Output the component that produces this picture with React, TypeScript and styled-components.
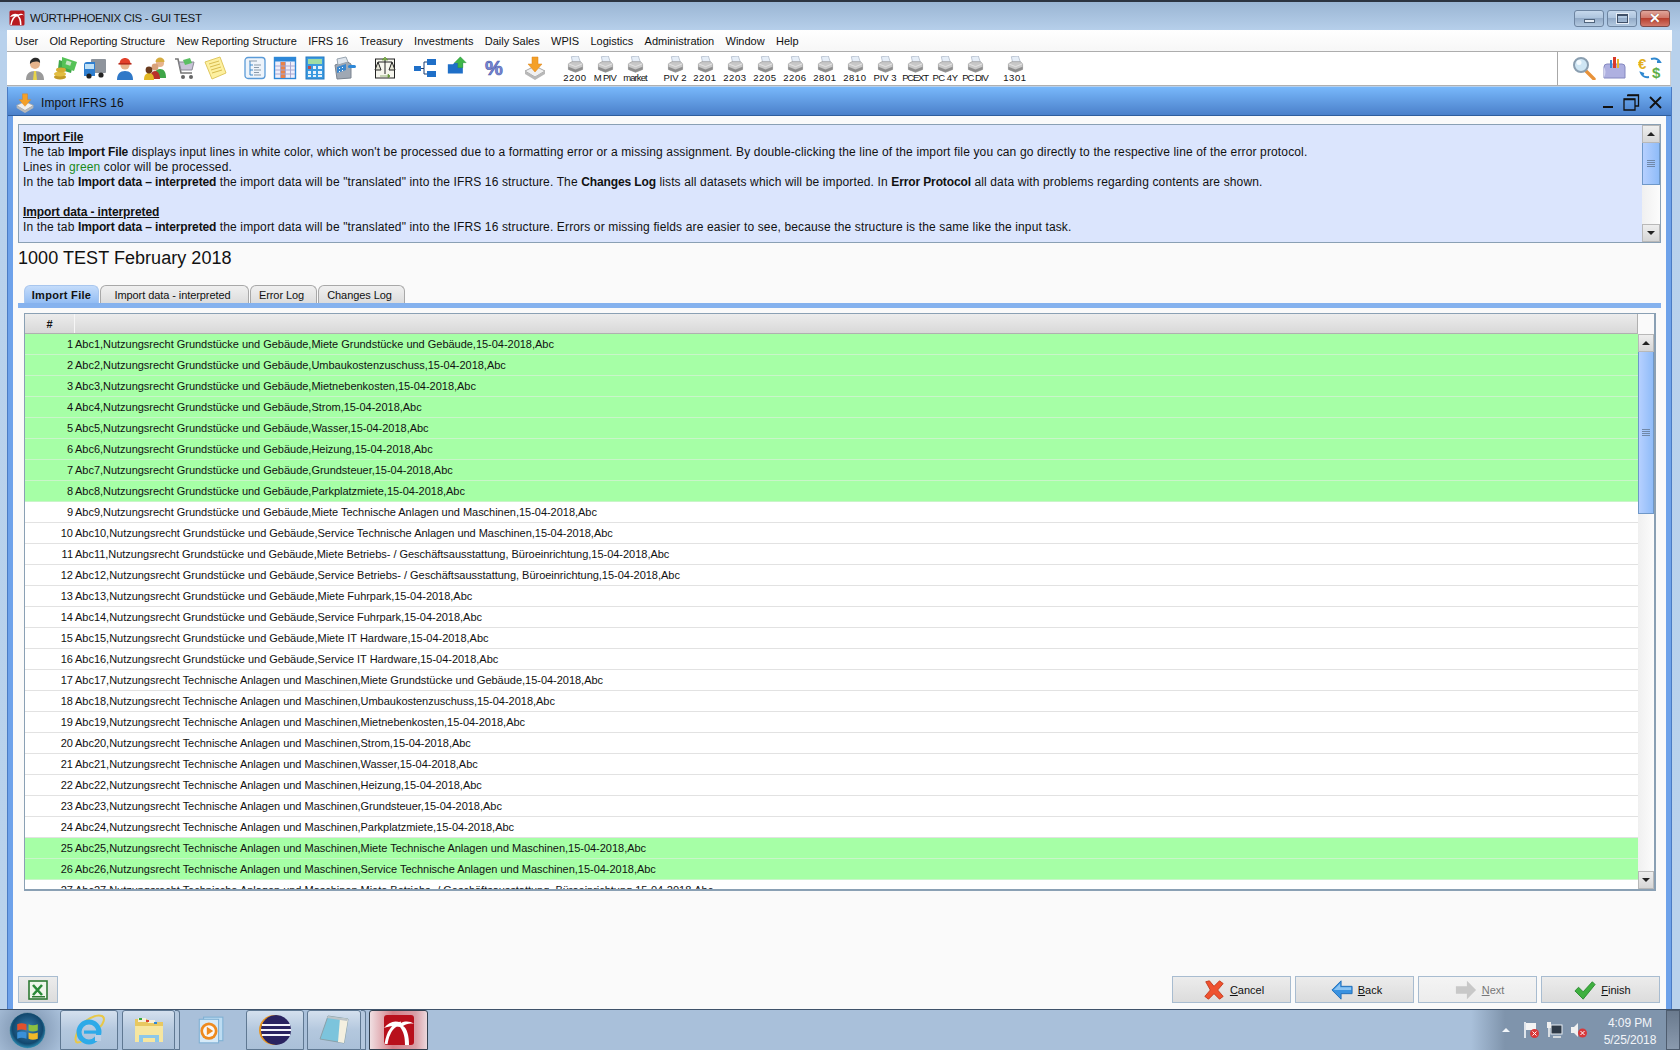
import React from "react";
import styled, { createGlobalStyle } from "styled-components";

const Global = createGlobalStyle`
  html, body { margin: 0; padding: 0; background: #a9c0da; overflow: hidden; }
  * { box-sizing: border-box; }
  svg { display: block; }
  #root { width: 1680px; height: 1050px; font-family: "Liberation Sans", Arial, sans-serif; color: #111; }
`;

const Page = styled.div`
  width: 1680px; height: 1050px; display: flex; flex-direction: column; overflow: hidden;
`;
const AppWindow = styled.div`
  height: 1009px; display: flex; flex-direction: column;
  padding: 0 8px 0 7px;
  border-top: 2px solid #2c3440;
  background: linear-gradient(#9ab5d3 0, #b8d1ec 30px, #b9d2ec 100%);
`;
const TitleBar = styled.div`
  height: 28px; flex: none; display: flex; align-items: center; padding: 4px 0 0 2px; position: relative;
`;
const TitleText = styled.span`
  margin-left: 5px; font-size: 11.5px; letter-spacing: -0.3px; color: #161616; white-space: nowrap;
`;
const WinControls = styled.div`
  margin-left: auto; display: flex; gap: 3px; margin-right: 2px;
`;
const WinButton = styled.div<{ $close?: boolean }>`
  width: 30px; height: 17px; border-radius: 3px; display: flex; align-items: center; justify-content: center;
  border: 1px solid ${(p) => (p.$close ? "#7d4a48" : "#6d84a0")};
  background: ${(p) =>
    p.$close
      ? "linear-gradient(#e0a59a 0, #d0786a 45%, #b8402f 50%, #d2786a 100%)"
      : "linear-gradient(#c6d8ec 0, #aec5de 45%, #93abc8 50%, #b3c9e0 100%)"};
`;
const MinGlyph = styled.i`
  width: 11px; height: 4px; margin-top: 5px; background: #e7eef6; border: 1px solid #50647c; display: block;
`;
const MaxGlyph = styled.i`
  width: 11px; height: 9px; background: transparent; border: 1px solid #3f5068; border-top-width: 2px; display: block; box-shadow: 0 0 0 1px #e8eef6;
`;
const CloseGlyph = styled.span`
  color: #fff; font-weight: 700; font-size: 14px; line-height: 14px; text-shadow: 0 0 1px #5a1a10;
`;
const MenuBar = styled.div`
  height: 21px; flex: none; display: flex; align-items: center; padding-left: 8px; background: linear-gradient(#ffffff, #f7f7f7);
`;
const MenuItem = styled.span`
  font-size: 11px; color: #111; white-space: nowrap; margin-right: 11.3px;
`;
const ToolBar = styled.div`
  height: 35px; flex: none; display: flex; align-items: flex-start; padding-left: 13px; background: #fff;
  border-top: 1px solid #adadad; border-bottom: 1px solid #b0b0b0; border-right: 1px solid #d0d0d0; margin-right: 1px;
`;
const Tool = styled.div<{ $gap?: number }>`
  width: 30px; height: 33px; flex: none; display: flex; flex-direction: column; align-items: center; padding-top: 4px;
  margin-left: ${(p) => p.$gap ?? 0}px;
`;
const PrinterLabel = styled.span<{ $track: number }>`
  font-size: 9.5px; line-height: 9px; white-space: nowrap; color: #111; letter-spacing: ${(p) => p.$track}px;
`;
const ToolRight = styled.div`
  margin-left: auto; width: 113px; height: 100%; border-left: 1px solid #a8a8a8; display: flex; align-items: flex-start; padding: 4px 0 0 14px; gap: 6px;
  & > :last-child { margin-left: 6px; }
`;
const InnerFrame = styled.div`
  flex: 1; margin-top: 1px; display: flex; flex-direction: column; min-height: 0;
  background: #6ea2ea; padding: 0 5px 0 5px; border-left: 1px solid #4b7cc4; border-right: 1px solid #4b7cc4;
`;
const FrameTitle = styled.div`
  height: 29px; flex: none; margin: 0 -5px; display: flex; align-items: center; padding: 3px 0 0 7px; position: relative;
  background: linear-gradient(#78b8fb, #4b80ca); border-bottom: 1px solid #2f5d9c;
`;
const FrameTitleText = styled.span`
  margin-left: 6px; font-size: 12px; letter-spacing: 0.1px; color: #111;
`;
const FrameControls = styled.div`
  margin-left: auto; display: flex; align-items: center; gap: 9px; padding-right: 9px;
`;
const FrameMin = styled.i`
  display: block; width: 10px; height: 2px; background: #111; margin-top: 9px; margin-right: 1px;
`;
const Content = styled.div`
  flex: 1; min-height: 0; display: flex; flex-direction: column; background: #fafafa; padding: 8px 5px 6px 5px;
`;
const InfoBox = styled.div`
  height: 119px; flex: none; display: flex; background: #dbe5fd; border: 1px solid #8aa0b4;
`;
const InfoText = styled.div`
  flex: 1; padding: 5px 0 0 4px; font-size: 12px; line-height: 15px; color: #111; overflow: hidden; white-space: nowrap; letter-spacing: 0.14px;
`;
const InfoTitle = styled.div`
  font-weight: 700; text-decoration: underline; letter-spacing: -0.1px;
`;
const Strong = styled.b`
  font-weight: 700; letter-spacing: -0.12px;
`;
const Gap = styled.div`
  height: 15px;
`;
const GreenWord = styled.span`
  color: #1a8a1a;
`;
const ScrollV = styled.div<{ $w: number }>`
  width: ${(p) => p.$w}px; flex: none; display: flex; flex-direction: column; background: linear-gradient(90deg, #f0f0f0, #fcfcfc);
`;
const ScrollBtn = styled.div<{ $h: number }>`
  height: ${(p) => p.$h}px; flex: none; display: flex; align-items: center; justify-content: center;
  background: linear-gradient(#eeeeee, #d6d6d6); border: 1px solid #b8b8b8;
`;
const TriUp = styled.i`
  display: block; width: 0; height: 0; border-left: 4px solid transparent; border-right: 4px solid transparent; border-bottom: 4px solid #222;
`;
const TriDown = styled.i`
  display: block; width: 0; height: 0; border-left: 4px solid transparent; border-right: 4px solid transparent; border-top: 4px solid #222;
`;
const Thumb = styled.div<{ $h: number }>`
  height: ${(p) => p.$h}px; flex: none; display: flex; align-items: center; justify-content: center;
  background: linear-gradient(90deg, #b6d0ff, #8fbcf8); border: 1px solid #6f98c8; border-top: 0;
`;
const Grip = styled.i`
  display: block; width: 8px; height: 8px;
  background: repeating-linear-gradient(#7088a8 0, #7088a8 1px, transparent 1px, transparent 2px);
`;
const ScrollFill = styled.div`
  flex: 1;
`;
const Heading = styled.div`
  margin-top: 4px; height: 22px; line-height: 22px; font-size: 18px; color: #111; flex: none; letter-spacing: 0.05px;
`;
const TabStrip = styled.div`
  margin-top: 16px; height: 23px; flex: none; display: flex; align-items: flex-end; padding-left: 6px; gap: 1px;
  border-bottom: 5px solid #85b2ee;
`;
const Tab = styled.div<{ $w: number; $active?: boolean }>`
  width: ${(p) => p.$w}px; height: 18px; display: flex; align-items: center; justify-content: center;
  padding-right: ${(p) => (p.$active ? 0 : 4)}px;
  font-size: 11px; color: #111; font-weight: ${(p) => (p.$active ? 700 : 400)};
  letter-spacing: ${(p) => (p.$active ? "0.3px" : "-0.08px")};
  border-radius: 6px 6px 0 0;
  background: ${(p) => (p.$active ? "linear-gradient(#c4dcfb, #93bdf3)" : "linear-gradient(#f0f0f0, #dcdcdc)")};
  border: 1px solid ${(p) => (p.$active ? "#a8c6ee" : "#a8a8a8")}; border-bottom: 0;
`;
const TableBox = styled.div`
  margin: 5px 5px 0 6px; height: 578px; flex: none; display: flex; background: #fafafa; border: 1px solid #8aa0b4; border-right-width: 2px; border-bottom-width: 2px;
`;
const TableMain = styled.div`
  flex: 1; min-width: 0; overflow: hidden; display: flex; flex-direction: column;
`;
const HeaderRow = styled.div`
  height: 20px; flex: none; display: flex; background: linear-gradient(#ececec, #d8d8d8); border-bottom: 1px solid #b0b0b0; border-right: 1px solid #b0b0b0;
`;
const HeaderNum = styled.div`
  width: 50px; font-size: 11px; font-weight: 700; text-align: center; line-height: 21px; border-right: 1px solid #f6f6f6;
`;
const Row = styled.div<{ $green: boolean }>`
  height: 21px; flex: none; display: flex; font-size: 11px; line-height: 20px; white-space: nowrap;
  background: ${(p) => (p.$green ? "#a6ffa6" : "#ffffff")};
  border-bottom: 1px solid ${(p) => (p.$green ? "#c9f5c9" : "#e2e2e2")};
`;
const RowNum = styled.div`
  width: 50px; text-align: right; padding-right: 2px; flex: none;
`;
const RowText = styled.div`
  letter-spacing: -0.02px;
`;
const ScrollCorner = styled.div`
  height: 20px; flex: none; background: #fafafa;
`;
const BottomBar = styled.div`
  margin-top: auto; display: flex; justify-content: space-between; padding-right: 1px; flex: none;
`;
const ExcelBtn = styled.div`
  width: 40px; height: 27px; display: flex; align-items: center; justify-content: center; background: linear-gradient(#ececec, #dcdcdc); border: 1px solid #a8bcd0;
`;
const Wizard = styled.div`
  display: flex; gap: 4px;
`;
const WizardBtn = styled.div<{ $disabled?: boolean }>`
  width: 119px; height: 27px; display: flex; align-items: center; justify-content: center; gap: 5px; padding-left: 4px;
  font-size: 11px; color: ${(p) => (p.$disabled ? "#777" : "#111")};
  background: ${(p) => (p.$disabled ? "linear-gradient(#f4f4f4, #ececec)" : "linear-gradient(#ececec, #dcdcdc)")};
  border: 1px solid #a8bcd0;
`;
const Key = styled.span`
  text-decoration: underline;
`;
const TaskBar = styled.div`
  height: 41px; flex: none; display: flex; align-items: stretch; position: relative; border-top: 1px solid #3f526a;
  background: linear-gradient(90deg, #a9c0da 0, #a9c0da 1471px, #7f94ac 1505px, #7f94ac 100%);
`;
const Orb = styled.div`
  width: 60px; flex: none; display: flex; align-items: center; justify-content: center; padding-right: 6px;
  background: radial-gradient(circle at 27px 20px, #8ea5c0 0, #8ea5c0 50%, #a9c0da 100%);
`;
const TaskBtn = styled.div<{ $w: number; $gap?: number; $active?: boolean; $plain?: boolean }>`
  width: ${(p) => p.$w}px; flex: none; margin-left: ${(p) => p.$gap ?? 0}px; display: flex; align-items: center; justify-content: center;
  border-radius: 3px 3px 0 0;
  border: ${(p) => (p.$plain ? "0" : `1px solid ${p.$active ? "#33404f" : "#5f7892"}`)};
  background: ${(p) =>
    p.$plain
      ? "transparent"
      : p.$active
      ? "linear-gradient(90deg, #f0dfe2 0, #d57f88 40%, #d8a0a8 80%, #ecd8dc 100%)"
      : "linear-gradient(#d4e0ee, #b4c8de 50%, #aac0d8)"};
`;
const Sliver = styled.div`
  width: 5px; flex: none; border: 1px solid #5f7892; border-left: 0; border-radius: 0 3px 0 0; background: #b4c8de;
`;
const Tray = styled.div`
  margin-left: auto; display: flex; align-items: center; gap: 6px;
`;
const TrayUp = styled.i`
  display: block; width: 0; height: 0; border-left: 4px solid transparent; border-right: 4px solid transparent; border-bottom: 4px solid #f2f6fa; margin-right: 6px;
`;
const Clock = styled.div`
  width: 72px; padding-top: 3px; text-align: center; color: #f2f5f9; font-size: 12px; line-height: 17px; letter-spacing: -0.1px;
`;
const ShowDesktop = styled.div`
  width: 14px; height: 100%; margin-left: -6px; background: linear-gradient(#6a7a8e, #8a9aae); border: 1px solid #4e5c6e;
`;

/* ---------- drawn icons ---------- */
const Sv: React.FC<{ s?: number; v?: number; children: React.ReactNode }> = ({ s = 24, v = 24, children }) => (
  <svg width={s} height={s} viewBox={`0 0 ${v} ${v}`}>{children}</svg>
);
const PalmMark = ({ s = 16 }: { s?: number }) => (
  <Sv s={s} v={16}>
    <rect x="0.5" y="0.5" width="15" height="15" rx="1.5" fill="#b81a20" />
    <path d="M2 15C3 9 5 6 9 5" stroke="#fff" strokeWidth="1.5" fill="none" />
    <path d="M1 7C3 4 6 3 9 4.5C11 3.5 13.5 3.5 15 5.5C13 4.8 11 5 9.5 6C11.5 7 12.5 10 12.5 15H11C11 11 10 8 8.5 6.5C6 6 3.5 6 1 7Z" fill="#fff" />
  </Sv>
);
const IPerson = () => (
  <Sv>
    <path d="M3 24c0-6 3-9 9-9s9 3 9 9z" fill="#9a9a9a" />
    <path d="M11 15h2l1 9h-4z" fill="#e8d44a" />
    <circle cx="12" cy="8" r="5" fill="#e6b48c" />
    <path d="M7 8c-1-7 11-9 10-1-2-2-7-2-10 1z" fill="#2a2a2a" />
  </Sv>
);
const IMoney = () => (
  <Sv>
    <path d="M6 4l14 4-2 9-13-4z" fill="#3fa648" />
    <path d="M9 1l15 5-3 9-12-4z" fill="#55c257" />
    <rect x="13" y="5" width="5" height="4" fill="#c9e7c6" transform="rotate(18 15 7)" />
    <ellipse cx="7" cy="21" rx="6" ry="2.6" fill="#c39a26" />
    <ellipse cx="7" cy="18" rx="6" ry="2.6" fill="#e2bd42" />
    <ellipse cx="8" cy="14" rx="5" ry="2.4" fill="#d6ad33" />
  </Sv>
);
const ITruck = () => (
  <Sv>
    <rect x="8" y="3" width="15" height="14" rx="1" fill="#8e949c" />
    <path d="M1 9q0-3 3-3h8v14H1z" fill="#2f7fd0" />
    <rect x="2" y="8" width="9" height="5" fill="#bfe0f6" />
    <circle cx="6" cy="20" r="2.6" fill="#222" />
    <circle cx="18" cy="19" r="2.6" fill="#222" />
  </Sv>
);
const IWorker = () => (
  <Sv>
    <path d="M4 24c0-6 3-9 8-9s8 3 8 9z" fill="#2f78c8" />
    <circle cx="12" cy="9" r="4.6" fill="#e6b48c" />
    <path d="M6.5 8c0-8 11-8 11 0z" fill="#e2402a" />
    <rect x="5.5" y="7" width="13" height="1.6" fill="#b82a1a" />
  </Sv>
);
const IGroup = () => (
  <Sv>
    <path d="M11 22c0-6 2-9 6-9s6 3 6 9z" fill="#3fa648" />
    <circle cx="17" cy="7" r="4" fill="#e6b48c" />
    <path d="M12.5 6c0-6 9-6 9 0z" fill="#d6ac40" />
    <path d="M7 23c0-5 2-8 5-8s5 3 5 8z" fill="#b8302a" />
    <circle cx="12" cy="11" r="3.4" fill="#d9a27a" />
    <path d="M1 24c0-5 2-7 5-7s5 2 5 7z" fill="#e2b826" />
    <circle cx="6" cy="14" r="3.4" fill="#6b3a1e" />
  </Sv>
);
const ICart = () => (
  <Sv>
    <path d="M2 3h3l3 14h11" stroke="#777" strokeWidth="1.6" fill="none" />
    <path d="M6 6h15l-2 8H8z" fill="#c8c4d8" stroke="#8a8a96" />
    <path d="M10 4l7-2 2 5-7 2z" fill="#5bbf64" />
    <circle cx="10" cy="21" r="2" fill="#666" />
    <circle cx="18" cy="21" r="2" fill="#666" />
  </Sv>
);
const INote = () => (
  <Sv>
    <path d="M2 6l15-5 6 16-14 6z" fill="#fdf0a0" stroke="#e0c860" />
    <path d="M6 8l10-3M7 11l10-3M8 14l10-3M9 17l10-3" stroke="#d8bc50" />
  </Sv>
);
const ITree = () => (
  <Sv>
    <rect x="2" y="1.5" width="20" height="21" rx="3" fill="#eef4fb" stroke="#5b9bd8" strokeWidth="1.3" />
    <path d="M7 5v14M7 9h3M7 14h3M7 19h3" stroke="#3a88cc" fill="none" />
    <path d="M6 5h8M11 9h7M11 14h7M11 19h7M11 11.5h5M11 16.5h5" stroke="#8a9aaa" strokeWidth="1.2" />
  </Sv>
);
const ITable = () => (
  <Sv>
    <rect x="1.5" y="1.5" width="21" height="21" fill="#f0eefa" stroke="#2e88d8" strokeWidth="1.4" />
    <rect x="2" y="2" width="20" height="3.5" fill="#2e88d8" />
    <rect x="8" y="6" width="4" height="16" fill="#e8824a" />
    <path d="M2 10h20M2 14h20M2 18h20M7.5 6v16M12.5 6v16M17.5 6v16" stroke="#a8a8d0" />
  </Sv>
);
const ICalc = () => (
  <Sv>
    <rect x="3" y="1" width="18" height="22" fill="#3a9ae0" stroke="#2478c0" />
    <rect x="5" y="3" width="14" height="5" fill="#9fdca4" />
    <rect x="5" y="10" width="3" height="3" fill="#b84a4a" />
    <path d="M10 10h3v3h-3zM15 10h4v3h-4zM5 15h3v3H5zM10 15h3v3h-3zM15 15h4v3h-4zM5 19h3v2H5zM10 19h3v2h-3zM15 19h4v2h-4z" fill="#e6f2fb" />
  </Sv>
);
const ICash = () => (
  <Sv>
    <path d="M2 9l11-4 5 3v14l-14 1z" fill="#9fa8b4" stroke="#7a8490" />
    <path d="M4 3l9-2 2 5-10 3z" fill="#dfe6ee" stroke="#98a4b0" />
    <path d="M4 11l9-3v6l-9 3z" fill="#3a88d0" />
    <path d="M6 12h1v1H6zM9 11h1v1H9zM6 15h1v1H6zM9 14h1v1H9z" fill="#fff" />
    <rect x="15" y="9" width="8" height="3" rx="1.5" fill="#2e88d8" />
  </Sv>
);
const IScale = () => (
  <Sv>
    <rect x="2.5" y="3" width="19" height="19" fill="#f6f6ee" stroke="#222" />
    <path d="M12 4v14M5 6h14M5 6l-3 8h6zM19 6l-3 8h6z" stroke="#222" fill="#e6e6d6" />
    <path d="M7 20h10l-2-2v4l2-2M12 1l-3 3h6z" fill="#7fb04a" stroke="#5a8a30" strokeWidth="0.6" />
  </Sv>
);
const IFlow = () => (
  <Sv>
    <rect x="1" y="10" width="7" height="5" fill="#1f6fc8" />
    <rect x="14" y="3" width="9" height="6" fill="#1f6fc8" />
    <rect x="14" y="15" width="9" height="6" fill="#1f6fc8" />
    <path d="M8 12.5h3V6h3M11 12.5V18h3" stroke="#163a70" fill="none" />
  </Sv>
);
const IUp = () => (
  <Sv s={20} v={24}>
    <path d="M1 10h6l2-2h10v13H1z" fill="#1f6fc8" />
    <path d="M16 1l7 7h-4v6h-6V8H9z" fill="#3fb648" stroke="#2a8a38" strokeWidth="0.5" />
  </Sv>
);
const PercentGlyph = styled.text`
  font-family: "Liberation Sans", sans-serif; font-weight: 700; font-size: 20px; fill: #7a8ad8; stroke: #4a5aa8; stroke-width: 0.6;
`;
const IPercent = () => (
  <Sv>
    <PercentGlyph x="2" y="19">%</PercentGlyph>
  </Sv>
);
const IImport = ({ s = 24 }: { s?: number }) => (
  <Sv s={s}>
    <path d="M2 15l10-5 10 5-10 6z" fill="#f0f0f0" stroke="#a8a8a8" />
    <path d="M2 15v3l10 6 10-6v-3l-10 6z" fill="#b8b8b8" />
    <path d="M9 1h6v7h4l-7 8-7-8h4z" fill="#f4a028" stroke="#d8801a" strokeWidth="0.5" />
  </Sv>
);
const IPrinter = () => (
  <Sv s={17} v={24}>
    <path d="M6 1l10-1 3 9H8z" fill="#e6eef8" stroke="#a8b4c4" />
    <path d="M2 11l5-3h12l3 3v8l-10 4-10-4z" fill="#c8c8c8" stroke="#9a9a9a" />
    <path d="M2 11l10 4 10-4" fill="none" stroke="#f0f0f0" />
    <path d="M2 15l10 4 10-4v4l-10 4-10-4z" fill="#8e8e8e" />
  </Sv>
);
const IMagnifier = () => (
  <Sv>
    <path d="M14 15l8 8" stroke="#e8923a" strokeWidth="3.4" strokeLinecap="round" />
    <circle cx="9" cy="9" r="7" fill="#cfe6f4" stroke="#8a9eb0" strokeWidth="2" />
    <circle cx="7" cy="6.5" r="2.5" fill="#f4fbff" />
  </Sv>
);
const IToolbox = () => (
  <Sv>
    <path d="M2 11q0-3 3-3h15q3 0 3 3v11H2z" fill="#aeb0e0" stroke="#8488c0" />
    <rect x="11" y="1" width="3" height="11" fill="#d83a2a" />
    <rect x="15" y="3" width="2" height="9" fill="#e8b830" />
    <rect x="8" y="4" width="2" height="8" fill="#3a88d0" />
    <path d="M2 11q3 4 0 11" fill="#d0d2f0" />
  </Sv>
);
const CurrencyGlyph = styled.text<{ $c: string }>`
  font-family: "Liberation Sans", sans-serif; font-weight: 700; font-size: 15px; fill: ${(p) => p.$c};
`;
const ICurrency = () => (
  <Sv>
    <CurrencyGlyph $c="#e2b020" x="0" y="13">€</CurrencyGlyph>
    <CurrencyGlyph $c="#5fae48" x="14" y="22">$</CurrencyGlyph>
    <path d="M13 3q6-2 9 3l-3 0M11 21q-6 1-8-4l3 1" stroke="#2f88d0" strokeWidth="2" fill="none" />
  </Sv>
);
const IExcel = () => (
  <Sv s={20} v={20}>
    <rect x="1" y="1" width="18" height="18" fill="#eef6ea" stroke="#2e7a34" strokeWidth="1.6" />
    <path d="M5 5l9 10M14 5l-9 10" stroke="#2a8a38" strokeWidth="2.6" />
    <rect x="4" y="16" width="13" height="1.5" fill="#2e7a34" />
  </Sv>
);
const ICancel = () => (
  <Sv s={22}>
    <path d="M3 3l4-1 5 6 6-6 4 3-6 7 6 7-4 3-6-6-6 6-4-3 6-7z" fill="#ef5230" stroke="#c43a1c" strokeLinejoin="round" />
  </Sv>
);
const IBack = () => (
  <Sv s={22}>
    <path d="M1 12l10-10v6h12v8H11v6z" fill="#3a92e0" stroke="#1f6cb8" strokeLinejoin="round" />
    <path d="M3 12l7-7v4h12v3H3z" fill="#8cc4f2" />
  </Sv>
);
const INext = () => (
  <Sv s={22}>
    <path d="M23 12L13 2v6H1v8h12v6z" fill="#c8c8c8" />
  </Sv>
);
const IFinish = () => (
  <Sv s={22}>
    <path d="M1 13l4-4 5 5L20 3l3 3-13 16z" fill="#3fb040" stroke="#2a8a30" strokeLinejoin="round" />
  </Sv>
);
const StartOrb = () => (
  <Sv s={37} v={36}>
    <defs>
      <radialGradient id="orb" cx="50%" cy="45%" r="60%">
        <stop offset="0" stopColor="#3a80b0" />
        <stop offset="0.7" stopColor="#12486e" />
        <stop offset="1" stopColor="#3ab0d8" />
      </radialGradient>
    </defs>
    <circle cx="18" cy="18" r="17.5" fill="url(#orb)" stroke="#9ab" strokeWidth="0.6" />
    <path d="M8 12q4-2 9 0v6q-5-2-9 0z" fill="#e2512c" />
    <path d="M19 12q4 2 9 0v6q-5 2-9 0z" fill="#8cc040" />
    <path d="M8 20q4-2 9 0v6q-5-2-9 0z" fill="#3a90d8" />
    <path d="M19 20q4 2 9 0v6q-5 2-9 0z" fill="#f0b828" />
  </Sv>
);
const IIE = () => (
  <Sv s={32} v={32}>
    <path d="M9 27C1 32 1 24 6 15 11 6 22 0 29 2c4 2 1 8-2 11" fill="none" stroke="#e8c848" strokeWidth="2" />
    <circle cx="16" cy="18" r="10" fill="none" stroke="#2eaae8" strokeWidth="5" />
    <rect x="11" y="16.5" width="15" height="3.2" fill="#2eaae8" />
    <path d="M22 21h6v6h-6z" fill="#bcd0e6" />
  </Sv>
);
const IFolder = () => (
  <Sv s={32} v={32}>
    <path d="M2 5h12l2 3h14v20H2z" fill="#e8c860" />
    <rect x="5" y="4" width="8" height="4" fill="#f6f0d8" />
    <rect x="15" y="6" width="7" height="3" fill="#f6f0d8" />
    <rect x="6" y="4" width="3" height="2" fill="#34a840" />
    <rect x="13" y="6" width="3" height="2" fill="#d84030" />
    <rect x="21" y="8" width="3" height="2" fill="#2e88d8" />
    <path d="M2 12h28v16H2z" fill="#f6e6a0" />
    <path d="M6 28v-7h20v7h-4v-4H10v4z" fill="#8cc8ea" />
  </Sv>
);
const IMedia = () => (
  <Sv s={30} v={28}>
    <rect x="8" y="2" width="18" height="22" fill="#bcdcf2" stroke="#7fb0d4" />
    <rect x="4" y="4" width="18" height="22" fill="#d6eaf8" stroke="#7fb0d4" />
    <circle cx="13" cy="15" r="8" fill="#ee8a1e" />
    <circle cx="13" cy="15" r="5.5" fill="#f8f8f8" />
    <path d="M11 11l6 4-6 4z" fill="#ee8a1e" />
  </Sv>
);
const IEclipse = () => (
  <Sv s={32} v={32}>
    <circle cx="15" cy="16" r="15" fill="#e8951e" />
    <circle cx="17" cy="16" r="15" fill="#2a2360" />
    <path d="M3 11h28M2 16h30M3 21h28" stroke="#f4f4fa" strokeWidth="2" />
  </Sv>
);
const INotepad = () => (
  <Sv s={32} v={32}>
    <path d="M10 2l20 3-4 24-24-4z" fill="#7cc4dc" stroke="#8aa0a8" />
    <path d="M22 4l8 1-4 24-6-1z" fill="#f4f0e0" />
    <path d="M10 2l20 3-1 2-20-3z" fill="#bcc4c8" />
  </Sv>
);
const IApp = () => (
  <Sv s={32} v={32}>
    <rect x="1" y="1" width="30" height="30" rx="3" fill="#b8101c" />
    <path d="M3 30C5 18 9 11 18 9" stroke="#fff" strokeWidth="3" fill="none" />
    <path d="M1 14C6 8 12 6 18 9C22 7 27 7 31 10C27 9 23 10 20 12C24 14 26 22 26 31H22C22 24 21 18 17 13C11 12 6 12 1 14Z" fill="#fff" />
  </Sv>
);
const ITrayFlag = () => (
  <Sv s={18} v={18}>
    <path d="M3 1v16" stroke="#fff" strokeWidth="1.5" />
    <path d="M4 2h10v7H4z" fill="#f4f4f4" />
    <circle cx="12.5" cy="12.5" r="4.5" fill="#d8383a" />
    <path d="M10.5 10.5l4 4M14.5 10.5l-4 4" stroke="#fff" />
  </Sv>
);
const ITrayNet = () => (
  <Sv s={18} v={18}>
    <rect x="5" y="4" width="11" height="9" fill="#2e3a48" stroke="#e8eef4" />
    <rect x="1" y="1" width="4" height="6" fill="#f0f0f0" />
    <path d="M3 7v9M7 16h8" stroke="#f0f0f0" strokeWidth="1.6" />
  </Sv>
);
const ITraySpeaker = () => (
  <Sv s={18} v={18}>
    <path d="M1 6h3l4-4v14l-4-4H1z" fill="#f0f0f0" />
    <circle cx="12.5" cy="12" r="4.5" fill="#d8383a" />
    <path d="M10.5 10l4 4M14.5 10l-4 4" stroke="#fff" />
  </Sv>
);
const FrameRestore = () => (
  <Sv s={17} v={17}>
    <path d="M4.5 1h11v11h-4M1 5h11v11H1z" fill="none" stroke="#111" strokeWidth="1.3" />
    <path d="M4 1.5h12M1 5.5h11" stroke="#111" strokeWidth="1.6" />
  </Sv>
);
const FrameClose = () => (
  <Sv s={13} v={13}>
    <path d="M1 1l11 11M12 1L1 12" stroke="#111" strokeWidth="1.9" />
  </Sv>
);

/* ---------- data ---------- */
const MENU = ["User", "Old Reporting Structure", "New Reporting Structure", "IFRS 16", "Treasury", "Investments", "Daily Sales", "WPIS", "Logistics", "Administration", "Window", "Help"];
const TOOLS: { I: React.FC; gap?: number }[] = [
  { I: IPerson }, { I: IMoney }, { I: ITruck }, { I: IWorker }, { I: IGroup }, { I: ICart }, { I: INote },
  { I: ITree, gap: 10 }, { I: ITable }, { I: ICalc }, { I: ICash },
  { I: IScale, gap: 10 }, { I: IFlow, gap: 10 }, { I: IUp, gap: 2 }, { I: IPercent, gap: 8 }, { I: IImport, gap: 10 },
];
const PRINTERS: { t: string; gap?: number; track: number }[] = [
  { t: "2200", gap: 10, track: 0.6 }, { t: "M PIV", track: -0.7 }, { t: "market", track: -0.9 }, { t: "PIV 2", gap: 10, track: 0 },
  { t: "2201", track: 0.6 }, { t: "2203", track: 0.6 }, { t: "2205", track: 0.6 }, { t: "2206", track: 0.6 },
  { t: "2801", track: 0.6 }, { t: "2810", track: 0.6 }, { t: "PIV 3", track: 0 }, { t: "PCEXT", track: -1.2 },
  { t: "PC 4Y", track: -0.5 }, { t: "PC DIV", track: -1 }, { t: "1301", gap: 10, track: 0.6 },
];
const ASSETS = ["Nutzungsrecht Grundstücke und Gebäude", "Nutzungsrecht Technische Anlagen und Maschinen"];
const KINDS = [
  "Miete Grundstücke und Gebäude", "Umbaukostenzuschuss", "Mietnebenkosten", "Strom", "Wasser", "Heizung", "Grundsteuer", "Parkplatzmiete",
  "Miete Technische Anlagen und Maschinen", "Service Technische Anlagen und Maschinen",
  "Miete Betriebs- / Geschäftsausstattung, Büroeinrichtung", "Service Betriebs- / Geschäftsausstattung, Büroeinrichtung",
  "Miete Fuhrpark", "Service Fuhrpark", "Miete IT Hardware", "Service IT Hardware",
];
const ROWS = Array.from({ length: 27 }, (_, i) => {
  const n = i + 1;
  return {
    n,
    green: n <= 8 || n === 25 || n === 26,
    text: `Abc${n},${ASSETS[Math.floor(i / 16)]},${KINDS[i % 16]},15-04-2018,Abc`,
  };
});

export default function App() {
  return (
    <Page>
      <Global />
      <AppWindow>
        <TitleBar>
          <PalmMark />
          <TitleText>WÜRTHPHOENIX CIS - GUI TEST</TitleText>
          <WinControls>
            <WinButton><MinGlyph /></WinButton>
            <WinButton><MaxGlyph /></WinButton>
            <WinButton $close><CloseGlyph>✕</CloseGlyph></WinButton>
          </WinControls>
        </TitleBar>
        <MenuBar>
          {MENU.map((m) => <MenuItem key={m}>{m}</MenuItem>)}
        </MenuBar>
        <ToolBar>
          {TOOLS.map(({ I, gap }, i) => <Tool key={i} $gap={gap}><I /></Tool>)}
          {PRINTERS.map(({ t, gap, track }) => (
            <Tool key={t} $gap={gap}>
              <IPrinter />
              <PrinterLabel $track={track}>{t}</PrinterLabel>
            </Tool>
          ))}
          <ToolRight>
            <IMagnifier />
            <IToolbox />
            <ICurrency />
          </ToolRight>
        </ToolBar>
        <InnerFrame>
          <FrameTitle>
            <IImport s={20} />
            <FrameTitleText>Import IFRS 16</FrameTitleText>
            <FrameControls>
              <FrameMin />
              <FrameRestore />
              <FrameClose />
            </FrameControls>
          </FrameTitle>
          <Content>
            <InfoBox>
              <InfoText>
                <InfoTitle>Import File</InfoTitle>
                <div>The tab <Strong>Import File</Strong> displays input lines in white color, which won't be processed due to a formatting error or a missing assignment. By double-clicking the line of the import file you can go directly to the respective line of the error protocol.</div>
                <div>Lines in <GreenWord>green</GreenWord> color will be processed.</div>
                <div>In the tab <Strong>Import data – interpreted</Strong> the import data will be "translated" into the IFRS 16 structure. The <Strong>Changes Log</Strong> lists all datasets which will be imported. In <Strong>Error Protocol</Strong> all data with problems regarding contents are shown.</div>
                <Gap />
                <InfoTitle>Import data - interpreted</InfoTitle>
                <div>In the tab <Strong>Import data – interpreted</Strong> the import data will be "translated" into the IFRS 16 structure. Errors or missing fields are easier to see, because the structure is the same like the input task.</div>
              </InfoText>
              <ScrollV $w={18}>
                <ScrollBtn $h={18}><TriUp /></ScrollBtn>
                <Thumb $h={42}><Grip /></Thumb>
                <ScrollFill />
                <ScrollBtn $h={18}><TriDown /></ScrollBtn>
              </ScrollV>
            </InfoBox>
            <Heading>1000 TEST February 2018</Heading>
            <TabStrip>
              <Tab $w={75} $active>Import File</Tab>
              <Tab $w={149}>Import data - interpreted</Tab>
              <Tab $w={67}>Error Log</Tab>
              <Tab $w={87}>Changes Log</Tab>
            </TabStrip>
            <TableBox>
              <TableMain>
                <HeaderRow><HeaderNum>#</HeaderNum></HeaderRow>
                {ROWS.map((r) => (
                  <Row key={r.n} $green={r.green}>
                    <RowNum>{r.n}</RowNum>
                    <RowText>{r.text}</RowText>
                  </Row>
                ))}
              </TableMain>
              <ScrollV $w={16}>
                <ScrollCorner />
                <ScrollBtn $h={18}><TriUp /></ScrollBtn>
                <Thumb $h={162}><Grip /></Thumb>
                <ScrollFill />
                <ScrollBtn $h={18}><TriDown /></ScrollBtn>
              </ScrollV>
            </TableBox>
            <BottomBar>
              <ExcelBtn><IExcel /></ExcelBtn>
              <Wizard>
                <WizardBtn><ICancel /><span><Key>C</Key>ancel</span></WizardBtn>
                <WizardBtn><IBack /><span><Key>B</Key>ack</span></WizardBtn>
                <WizardBtn $disabled><INext /><span><Key>N</Key>ext</span></WizardBtn>
                <WizardBtn><IFinish /><span><Key>F</Key>inish</span></WizardBtn>
              </Wizard>
            </BottomBar>
          </Content>
        </InnerFrame>
      </AppWindow>
      <TaskBar>
        <Orb><StartOrb /></Orb>
        <TaskBtn $w={58}><IIE /></TaskBtn>
        <TaskBtn $w={53} $gap={4}><IFolder /></TaskBtn>
        <Sliver />
        <TaskBtn $w={60} $plain><IMedia /></TaskBtn>
        <TaskBtn $w={58} $gap={6}><IEclipse /></TaskBtn>
        <TaskBtn $w={54} $gap={3}><INotepad /></TaskBtn>
        <Sliver />
        <TaskBtn $w={59} $gap={3} $active><IApp /></TaskBtn>
        <Tray>
          <TrayUp />
          <ITrayFlag />
          <ITrayNet />
          <ITraySpeaker />
          <Clock>4:09 PM<br />5/25/2018</Clock>
          <ShowDesktop />
        </Tray>
      </TaskBar>
    </Page>
  );
}
